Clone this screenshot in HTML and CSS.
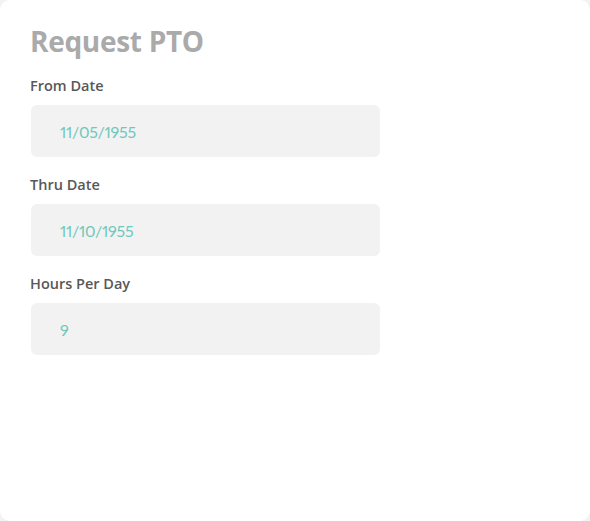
FILE: index.html
```html
<!DOCTYPE html>
<html lang="en">
<head>
    <meta charset="UTF-8">
    <meta name="viewport" content="width=device-width, initial-scale=1.0">
    <title>Request PTO</title>
    <link rel="stylesheet" href="styles.css">
</head>
<body>
    <!-- PTO Card -->
    <div class="pto-card">
        <h1 class="pto-title">Request PTO</h1>

        <div class="field">
            <label class="field-label">From Date</label>
            <div class="field-box">11/05/1955</div>
        </div>

        <div class="field">
            <label class="field-label">Thru Date</label>
            <div class="field-box">11/10/1955</div>
        </div>

        <div class="field">
            <label class="field-label">Hours Per Day</label>
            <div class="field-box">9</div>
        </div>
    </div>
</body>
</html>
```

FILE: styles.css
```css
/* General Styles */
body {
    font-family: "Open Sans", Lato, sans-serif;
    margin: 0;
    padding: 0;
    background-color: #f3f3f3;
}

/* Card */
.pto-card {
    box-sizing: border-box;
    height: 521px;
    background-color: #fff;
    border-radius: 10px;
    padding: 24px 30px;
}

.pto-title {
    margin: 0 0 18px;
    font-size: 28px;
    font-weight: 700;
    color: #aaaaaa;
    line-height: 34px;
    letter-spacing: -0.3px;
}

/* Fields */
.field {
    display: flex;
    flex-direction: column;
    margin-bottom: 18px;
}

.field-label {
    font-size: 14.5px;
    font-weight: 600;
    color: #585858;
    line-height: 20px;
    margin-bottom: 9px;
}

.field-box {
    width: 349px;
    height: 52px;
    margin-left: 1px;
    box-sizing: border-box;
    padding: 0 29px;
    display: flex;
    align-items: center;
    background-color: #f2f2f2;
    border-radius: 6px;
    font-family: Lato, "Open Sans", sans-serif;
    font-size: 16px;
    font-variant-numeric: proportional-nums;
    letter-spacing: -0.3px;
    color: #6fc8bb;
}
```
